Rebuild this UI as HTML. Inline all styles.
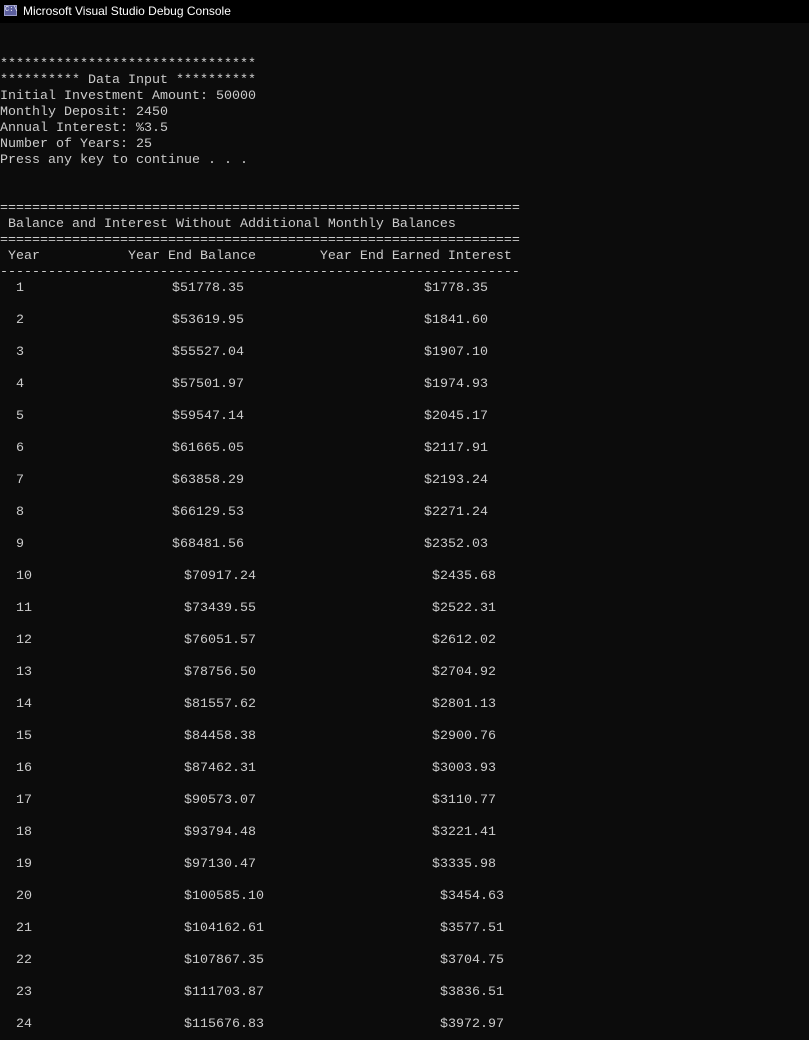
<!DOCTYPE html>
<html><head><meta charset="utf-8"><style>
html,body{margin:0;padding:0;background:#0c0c0c;width:809px;height:1040px;overflow:hidden}
#tb{position:absolute;left:0;top:0;width:809px;height:23px;background:#000;color:#fff;font:12px "Liberation Sans",sans-serif}
#tb .ic{position:absolute;left:4px;top:5px;width:13px;height:11px;background:#5b5e9e;border:1px solid #9a9cc8;box-sizing:border-box;color:#fff;font:7px "Liberation Mono",monospace;line-height:9px;text-align:center}
#tb .t{position:absolute;left:23px;top:4px}
.l{position:absolute;left:0;height:16px;line-height:16px;font:13.33px "Liberation Mono",monospace;color:#cccccc;white-space:pre}
.s{position:absolute;height:16px;line-height:16px;font:13.33px "Liberation Mono",monospace;color:#cccccc;white-space:pre}
</style></head><body>
<div id="tb"><div class="ic">C:\</div><div class="t">Microsoft Visual Studio Debug Console</div></div>
<div class="l" style="top:57px">********************************</div>
<div class="l" style="top:73px">********** Data Input **********</div>
<div class="l" style="top:89px">Initial Investment Amount: 50000</div>
<div class="l" style="top:105px">Monthly Deposit: 2450</div>
<div class="l" style="top:121px">Annual Interest: %3.5</div>
<div class="l" style="top:137px">Number of Years: 25</div>
<div class="l" style="top:153px">Press any key to continue . . .</div>
<div class="l" style="top:201px">=================================================================</div>
<div class="l" style="top:217px"> Balance and Interest Without Additional Monthly Balances</div>
<div class="l" style="top:233px">=================================================================</div>
<div class="l" style="top:249px"> Year           Year End Balance        Year End Earned Interest</div>
<div class="l" style="top:265px">-----------------------------------------------------------------</div>
<div id="rows"></div>
<script>
var d=[["1","$51778.35","$1778.35"],["2","$53619.95","$1841.60"],["3","$55527.04","$1907.10"],["4","$57501.97","$1974.93"],["5","$59547.14","$2045.17"],["6","$61665.05","$2117.91"],["7","$63858.29","$2193.24"],["8","$66129.53","$2271.24"],["9","$68481.56","$2352.03"],["10","$70917.24","$2435.68"],["11","$73439.55","$2522.31"],["12","$76051.57","$2612.02"],["13","$78756.50","$2704.92"],["14","$81557.62","$2801.13"],["15","$84458.38","$2900.76"],["16","$87462.31","$3003.93"],["17","$90573.07","$3110.77"],["18","$93794.48","$3221.41"],["19","$97130.47","$3335.98"],["20","$100585.10","$3454.63"],["21","$104162.61","$3577.51"],["22","$107867.35","$3704.75"],["23","$111703.87","$3836.51"],["24","$115676.83","$3972.97"]];
var h="";
d.forEach(function(r,i){var t=281+32*i;var b=r[0].length>1?184:172;var c=r[1].length>9?440:(r[0].length>1?432:424);
h+='<div class="s" style="left:16px;top:'+t+'px">'+r[0]+'</div><div class="s" style="left:'+b+'px;top:'+t+'px">'+r[1]+'</div><div class="s" style="left:'+c+'px;top:'+t+'px">'+r[2]+'</div>';});
document.getElementById("rows").innerHTML=h;
</script>
</body></html>
